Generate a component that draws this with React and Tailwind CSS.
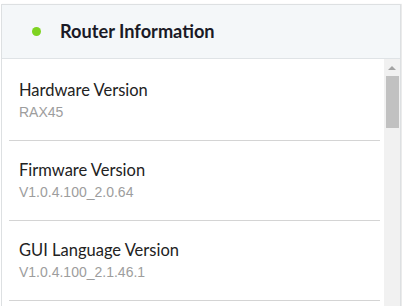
import React from 'react'

const items = [
    { label: 'Hardware Version', value: 'RAX45' },
    { label: 'Firmware Version', value: 'V1.0.4.100_2.0.64' },
    { label: 'GUI Language Version', value: 'V1.0.4.100_2.1.46.1' },
]

function Scrollbar() {
    return (
        <div className="flex w-[16px] shrink-0 flex-col items-center bg-[#f1f1f1]">
            <div className="mt-[7px] h-0 w-0 border-x-[4px] border-b-[4px] border-x-transparent border-b-[#a3a3a3]" />
            <div className="mt-[6px] h-[52px] w-[13px] bg-[#c1c1c1]" />
            <div className="flex-1" />
            <div className="mb-[8px] h-0 w-0 border-x-[4px] border-t-[4px] border-x-transparent border-t-[#505050]" />
        </div>
    )
}

export default function App() {
    return (
        <div className="h-[306px] overflow-hidden bg-white pt-[4px] pl-[1px]" style={{ fontFamily: 'Lato, "Liberation Sans", sans-serif' }}>
            <div className="w-[400px] border border-[#dde0e2] shadow-[1px_0_1px_rgba(0,0,0,0.08)]">
                <div className="flex h-[54px] items-center border-b border-[#dfe3e6] bg-[#f4f7f9]">
                    <span className="ml-[30px] h-[9px] w-[9px] rounded-full bg-[#7ed321]" />
                    <h2 className="ml-[19px] text-[18.2px] font-bold text-[#1a1a26]">Router Information</h2>
                </div>
                <div className="flex h-[260px]">
                    <div className="flex-1 overflow-hidden pt-[2px]">
                        {items.map((item) => (
                            <div key={item.label} className="ml-[7px] mr-[4px] border-b border-[#d4d4d4] pt-[19px] pb-[18px] pl-[10px]">
                                <div className="text-[16.5px] leading-[20px] text-[#222]">{item.label}</div>
                                <div className="mt-[2px] text-[14px] leading-[20px] text-[#9d9d9d]" style={{ fontFamily: '"Liberation Sans", Arial, sans-serif' }}>{item.value}</div>
                            </div>
                        ))}
                    </div>
                    <Scrollbar />
                </div>
            </div>
        </div>
    )
}
